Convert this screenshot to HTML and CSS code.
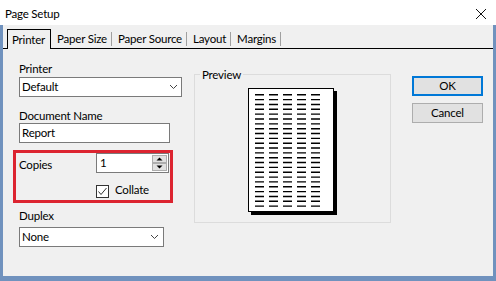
FILE: index.html
```html
<html>
<head>
<link rel="stylesheet" href="styles.css">
</head>
  <body>
    <div class="window">
      <div class="titlebar">
        <span class="title">Page Setup</span>
        <svg class="close" width="10" height="10" viewBox="0 0 10 10">
          <path d="M0 0L10 10M10 0L0 10" stroke="#111" stroke-width="1" fill="none"/>
        </svg>
      </div>
      <div class="frame">
        <div class="tabs">
          <div class="tab active">Printer</div>
          <div class="tab">Paper Size</div>
          <div class="tab">Paper Source</div>
          <div class="tab">Layout</div>
          <div class="tab">Margins</div>
        </div>
        <div class="content">
          <div class="left">
            <div class="label">Printer</div>
            <div class="combo printer-combo">
              <span class="value">Default</span>
              <svg width="7" height="4" viewBox="0 0 7 4"><path d="M0 0L3.5 3.5L7 0" stroke="#444" fill="none"/></svg>
            </div>
            <div class="label docname-label">Document Name</div>
            <div class="textbox docname">Report</div>
            <div class="copies-box">
              <div class="copies-row">
                <div class="label copies-label">Copies</div>
                <div class="textbox spinner">
                  <span class="value">1</span>
                  <svg width="15" height="16" viewBox="0 0 15 16">
                    <rect x="0.5" y="0.5" width="14" height="7" fill="#e1e1e1" stroke="#adadad"/>
                    <rect x="0.5" y="8.5" width="14" height="7" fill="#e1e1e1" stroke="#adadad"/>
                    <path d="M4.5 5.5h6l-3-3z" fill="#000"/>
                    <path d="M4.5 10.5h6l-3 3z" fill="#000"/>
                  </svg>
                </div>
              </div>
              <div class="collate-row">
                <svg class="checkbox" width="13" height="13" viewBox="0 0 13 13">
                  <rect x="0.5" y="0.5" width="12" height="12" fill="#fff" stroke="#333"/>
                  <path d="M2.5 6.5L5 9.5L10.5 3" stroke="#333" stroke-width="1" fill="none"/>
                </svg>
                <span class="label">Collate</span>
              </div>
            </div>
            <div class="label duplex-label">Duplex</div>
            <div class="combo duplex-combo">
              <span class="value">None</span>
              <svg width="7" height="4" viewBox="0 0 7 4"><path d="M0 0L3.5 3.5L7 0" stroke="#444" fill="none"/></svg>
            </div>
          </div>

          <fieldset class="preview">
            <legend>Preview</legend>
            <svg class="sheet" width="90" height="128" viewBox="0 0 90 128">
              <rect x="3" y="3" width="86" height="124" fill="#000"/>
              <rect x="0.5" y="0.5" width="85" height="123" fill="#fff" stroke="#000"/>
              <path stroke="#000" stroke-width="1.4" fill="none"
                d="M7 6.8h9m5 0h9m5 0h9m5 0h9m5 0h9
                   M7 11.64h9m5 0h9m5 0h9m5 0h9m5 0h9
                   M7 16.48h9m5 0h9m5 0h9m5 0h9m5 0h9
                   M7 21.32h9m5 0h9m5 0h9m5 0h9m5 0h9
                   M7 26.16h9m5 0h9m5 0h9m5 0h9m5 0h9
                   M7 31h9m5 0h9m5 0h9m5 0h9m5 0h9
                   M7 35.84h9m5 0h9m5 0h9m5 0h9m5 0h9
                   M7 40.68h9m5 0h9m5 0h9m5 0h9m5 0h9
                   M7 45.52h9m5 0h9m5 0h9m5 0h9m5 0h9
                   M7 50.36h9m5 0h9m5 0h9m5 0h9m5 0h9
                   M7 55.2h9m5 0h9m5 0h9m5 0h9m5 0h9
                   M7 60.04h9m5 0h9m5 0h9m5 0h9m5 0h9
                   M7 64.88h9m5 0h9m5 0h9m5 0h9m5 0h9
                   M7 69.72h9m5 0h9m5 0h9m5 0h9m5 0h9
                   M7 74.56h9m5 0h9m5 0h9m5 0h9m5 0h9
                   M7 79.4h9m5 0h9m5 0h9m5 0h9m5 0h9
                   M7 84.24h9m5 0h9m5 0h9m5 0h9m5 0h9
                   M7 89.08h9m5 0h9m5 0h9m5 0h9m5 0h9
                   M7 93.92h9m5 0h9m5 0h9m5 0h9m5 0h9
                   M7 98.76h9m5 0h9m5 0h9m5 0h9m5 0h9
                   M7 103.6h9m5 0h9m5 0h9m5 0h9m5 0h9
                   M7 108.44h9m5 0h9m5 0h9m5 0h9m5 0h9
                   M7 113.28h9m5 0h9m5 0h9m5 0h9m5 0h9
                   M7 118.12h9m5 0h9m5 0h9m5 0h9m5 0h9"/>
            </svg>
          </fieldset>

          <div class="buttons">
            <div class="button default">OK</div>
            <div class="button">Cancel</div>
          </div>
        </div>
      </div>
    </div>
  </body>
</html>
```

FILE: styles.css
```css
body {
    margin: 0;
    background: #7092be;
    font-family: Lato, "Noto Sans", sans-serif;
    font-size: 11.5px;
    letter-spacing: -0.2px;
    color: #000;
}

.window {
    width: 496px;
    height: 281px;
    display: flex;
    flex-direction: column;
}

.titlebar {
    height: 25px;
    box-sizing: border-box;
    padding: 2px 10px 0 5px;
    background: #fff;
    display: flex;
    align-items: center;
}

.title {
    flex: 1;
    line-height: 15px;
}

.frame {
    flex: 1;
    margin: 0 3px 5px;
    background: #f0f0f0;
}

/* tab strip */
.tabs {
    display: flex;
    align-items: flex-end;
    height: 23px;
    padding-left: 4px;
    border-bottom: 1px solid #000;
}

.tab {
    line-height: 14px;
    padding: 0 4px 0 6px;
    margin-bottom: 2px;
    border-right: 1px solid #a0a0a0;
}

.tab.active {
    line-height: 15px;
    padding: 2px 5px 2px 4px;
    margin-bottom: -1px;
    border: 1px solid #000;
    border-bottom: none;
    background: #f0f0f0;
}

.content {
    display: flex;
    align-items: flex-start;
    padding-left: 16px;
}

/* left column */
.left {
    width: 163px;
    padding-top: 12px;
    display: flex;
    flex-direction: column;
    align-items: flex-start;
}

.label {
    line-height: 15px;
}

.combo,
.textbox {
    height: 20px;
    box-sizing: border-box;
    border: 1px solid #7a7a7a;
    background: #fff;
    display: flex;
    align-items: center;
    padding-left: 2px;
    line-height: 18px;
}

.combo .value,
.textbox .value {
    flex: 1;
}

.combo svg {
    margin-right: 4px;
}

.printer-combo {
    width: 163px;
    margin-top: 1px;
}

.docname-label {
    margin-top: 11px;
}

.docname {
    width: 151px;
}

.copies-box {
    width: 160px;
    box-sizing: border-box;
    margin: 7px 0 0 -6px;
    padding: 0 0 2px 3px;
    border: 3px solid #dc2430;
}

.copies-row {
    display: flex;
    align-items: flex-start;
}

.copies-label {
    width: 77px;
    margin-top: 4px;
}

.spinner {
    width: 73px;
    padding-left: 3px;
}

.spinner svg {
    margin-right: 1px;
}

.collate-row {
    display: flex;
    align-items: flex-start;
    margin: 9px 0 0 77px;
}

.checkbox {
    margin: 3px 6px 0 0;
}

.duplex-label {
    margin-top: 5px;
}

.duplex-combo {
    width: 145px;
    margin-top: 4px;
}

.duplex-combo svg {
    margin-right: 5px;
}

/* preview group */
.preview {
    width: 197px;
    box-sizing: border-box;
    min-width: 0;
    margin: 18px 0 0 12px;
    padding: 0 0 6px 0;
    border: 1px solid #dcdcdc;
}

.preview legend {
    margin-left: 5px;
    padding: 0 2px;
    line-height: 15px;
}

.sheet {
    display: block;
    margin: 6px 0 0 53px;
}

/* buttons */
.buttons {
    width: 71px;
    margin: 27px 0 0 21px;
    display: flex;
    flex-direction: column;
    gap: 7px;
}

.button {
    height: 20px;
    box-sizing: border-box;
    border: 1px solid #adadad;
    background: #e1e1e1;
    text-align: center;
    line-height: 18px;
}

.button.default {
    border: 2px solid #0078d7;
    line-height: 16px;
}
```
